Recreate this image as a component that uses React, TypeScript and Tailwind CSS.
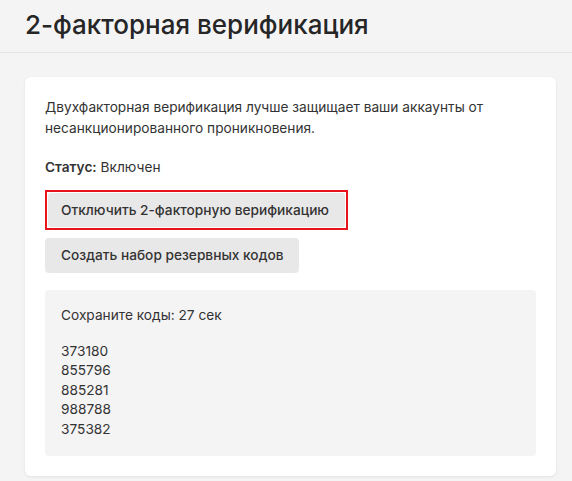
import React from "react";

export default function App() {
  const codes = ["373180", "855796", "885281", "988788", "375382"];
  return (
    <div
      className="min-h-[481px] w-[572px] bg-[#f5f4f5] text-[#333333]"
      style={{ fontFamily: "Inter, 'Noto Sans', sans-serif" }}
    >
      <div className="flex h-[53px] items-center border-b border-[#e6e4e5] px-[25px]">
        <h1 className="-mt-[3px] text-[26px] font-medium leading-none text-[#262626]">
          2-факторная верификация
        </h1>
      </div>
      <div className="pl-[25px] pr-[16px] pt-[24px]">
        <div className="rounded-[6px] bg-white p-[20px] shadow-[0_1px_3px_rgba(0,0,0,0.08)]">
          <p className="text-[13.7px] leading-[21px]">
            Двухфакторная верификация лучше защищает ваши аккаунты от
            <br />
            несанкционированного проникновения.
          </p>
          <p className="mt-[18px] text-[13.7px] leading-[21px]">
            <span className="font-semibold">Статус:</span> Включен
          </p>
          <div className="mt-[12px] flex flex-col items-start">
            <div className="border-2 border-[#e8141b] p-px">
              <button className="flex h-[34px] items-center rounded-[3px] bg-[#e9e8e9] pl-[13px] pr-[16px] text-[13.7px] font-medium text-[#333333]">
                Отключить 2-факторную верификацию
              </button>
            </div>
            <button className="mt-[8px] flex h-[35px] items-center rounded-[4px] bg-[#e9e8e9] px-[16px] text-[13.7px] font-medium text-[#333333]">
              Создать набор резервных кодов
            </button>
          </div>
          <div className="mt-[17px] rounded-[4px] bg-[#f5f4f5] px-[16px] pb-[16px] pt-[16px] text-[13.7px] leading-[19.6px]">
            <p>Сохраните коды: 27 сек</p>
            <div className="mt-[16px] flex flex-col">
              {codes.map((c) => (
                <span key={c}>{c}</span>
              ))}
            </div>
          </div>
        </div>
      </div>
    </div>
  );
}
